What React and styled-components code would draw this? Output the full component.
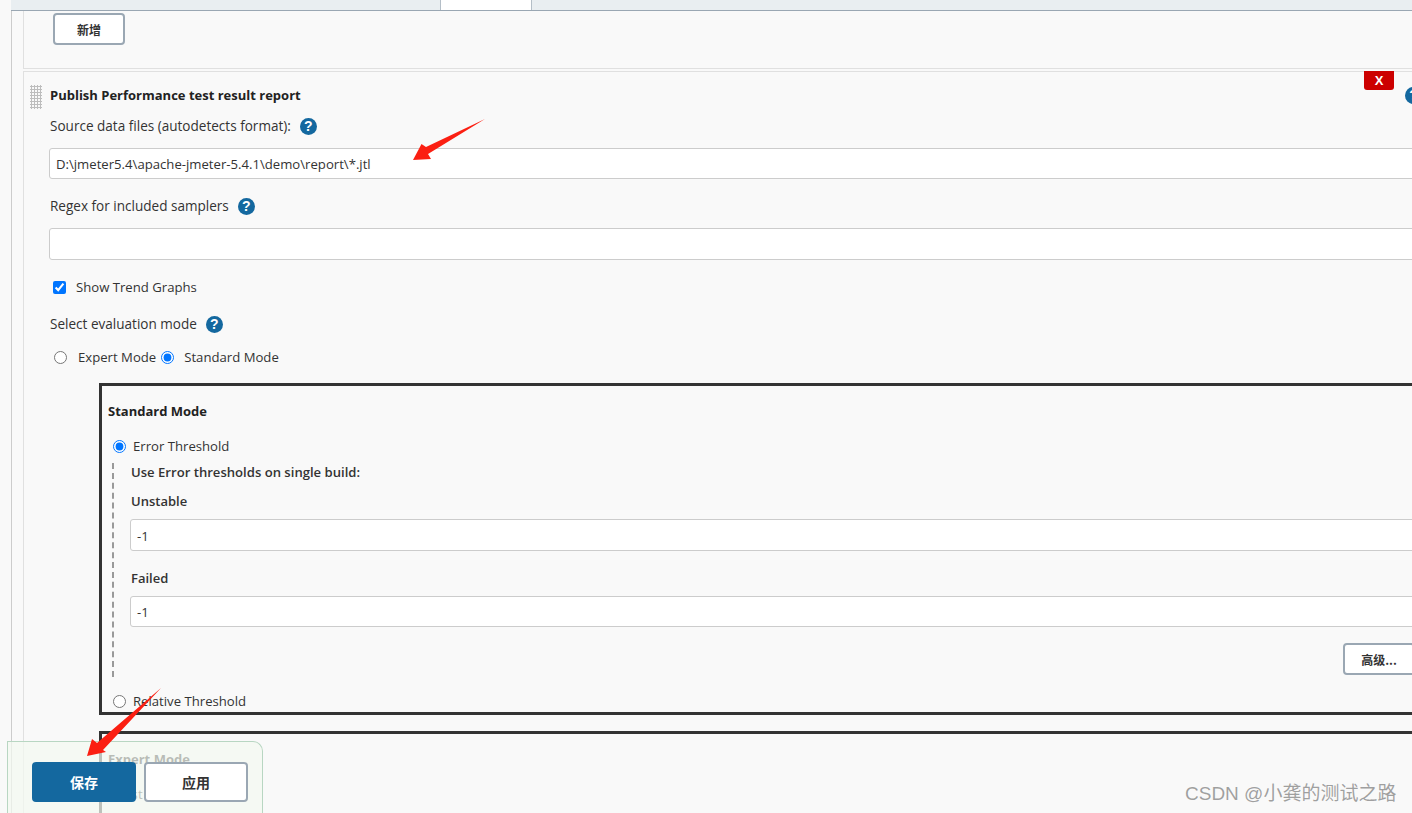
import React from 'react';
import styled, { createGlobalStyle } from 'styled-components';

const GlobalStyle = createGlobalStyle`
  html, body {
    margin: 0;
    padding: 0;
    background: #f9f9f9;
  }
  body {
    font-family: "Open Sans", "Noto Sans CJK SC", sans-serif;
    font-size: 13px;
    color: #333;
    overflow: hidden;
  }
`;

const Page = styled.div`
  position: relative;
  width: 1412px;
  height: 813px;
  overflow: hidden;
  background: #f9f9f9;
`;

const TabBar = styled.div`
  display: flex;
  height: 10px;
  margin-left: 11px;
  padding-left: 429px;
  background: #e9eef1;
  border-bottom: 1px solid #9aa7b3;
`;

const Tab = styled.div`
  width: 90px;
  height: 10px;
  background: #fff;
  border-left: 1px solid #b4bec7;
  border-right: 1px solid #b4bec7;
`;

const Main = styled.div`
  width: 1460px;
  height: 802px;
  margin-left: 11px;
  padding-left: 11px;
  border-left: 1px solid #ccc;
`;

const AddSection = styled.div`
  height: 58px;
  box-sizing: border-box;
  padding: 2px 0 0 29px;
  border-left: 1px solid #e0e0e0;
  border-bottom: 1px solid #e0e0e0;
`;

const Button = styled.button`
  width: ${({ $w }) => $w || 72}px;
  height: ${({ $h }) => $h || 32}px;
  box-sizing: border-box;
  padding: 0;
  background: #fff;
  border: 2px solid #9aa7b3;
  border-radius: 4px;
  color: #333;
  font-family: "Noto Sans CJK SC", sans-serif;
  font-size: ${({ $size }) => $size || 12}px;
  font-weight: 700;
`;

const Card = styled.section`
  position: relative;
  height: 760px;
  box-sizing: border-box;
  margin-top: 2px;
  padding-left: 25px;
  border-left: 1px solid #e0e0e0;
  border-top: 1px solid #e0e0e0;
`;

const Handle = styled.div`
  position: absolute;
  left: 6px;
  top: 13px;
  width: 12px;
  height: 24px;
  background-image: radial-gradient(#bdbdbd 1px, transparent 1.2px);
  background-size: 3px 3px;
`;

const DeleteButton = styled.button`
  position: absolute;
  left: 1340px;
  top: -1px;
  width: 30px;
  height: 19px;
  padding: 0 0 1px;
  background: #cc0000;
  border: none;
  border-radius: 0 0 3px 3px;
  color: #fff;
  font-family: "Liberation Sans", sans-serif;
  font-size: 13px;
  font-weight: 700;
`;

const TitleRow = styled.div`
  display: flex;
  align-items: center;
  justify-content: space-between;
  width: 1372px;
  height: 18px;
  padding: 14px 0 0 1px;
`;

const Title = styled.div`
  color: #222;
  font-size: 13px;
  font-weight: 700;
`;

const LabelRow = styled.div`
  display: flex;
  align-items: center;
  gap: 9px;
  height: 20px;
  margin-top: ${({ $top }) => $top}px;
  padding-left: 1px;
  color: #333;
  font-size: 13.55px;
`;

const Help = styled.span`
  display: inline-flex;
  flex: none;
  align-items: center;
  justify-content: center;
  width: 17px;
  height: 17px;
  border-radius: 50%;
  background: #14689f;
  color: #fff;
  font-family: "Liberation Sans", sans-serif;
  font-size: 14px;
  font-weight: 700;
`;

const TextInput = styled.div`
  display: flex;
  align-items: center;
  height: ${({ $h }) => $h || 31}px;
  box-sizing: border-box;
  margin-top: ${({ $top }) => $top}px;
  padding: 1px 0 0 6px;
  background: #fff;
  border: 1px solid #ccc;
  border-radius: 3px;
  color: #333;
  font-size: 13.15px;
`;

const CheckRow = styled.label`
  display: flex;
  align-items: center;
  height: 20px;
  margin: ${({ $top }) => $top}px 0 0 ${({ $left }) => $left || 0}px;
  color: #333;
  font-size: 13.15px;
`;

const Native = styled.input`
  flex: none;
  width: 13px;
  height: 13px;
  margin: 0 ${({ $gap }) => $gap || 10}px 0 ${({ $before }) => $before || 0}px;
  accent-color: #0075ff;
`;

const ModeBox = styled.div`
  width: 1320px;
  height: ${({ $h }) => $h}px;
  box-sizing: border-box;
  margin: ${({ $top }) => $top}px 0 0 50px;
  padding-left: 6px;
  border: 3px solid #333;
`;

const BoxTitle = styled.div`
  height: 20px;
  margin-top: ${({ $top }) => $top}px;
  color: #222;
  font-weight: 700;
`;

const HiddenLine = styled.div`
  height: 20px;
  margin: 15px 0 0 9px;
  font-size: 13.15px;
`;

const Branch = styled.div`
  width: 1303px;
  height: 214px;
  box-sizing: border-box;
  margin: 7px 0 0 4px;
  padding-left: 16px;
  border-left: 2px dashed #999;
`;

const BranchHeading = styled.div`
  height: 20px;
  padding-left: 1px;
  font-size: 13.1px;
  font-weight: 600;
`;

const FieldLabel = styled.div`
  height: 20px;
  margin-top: ${({ $top }) => $top}px;
  padding-left: 1px;
  font-weight: 600;
`;

const AdvancedRow = styled.div`
  display: flex;
  justify-content: flex-end;
  margin-top: 16px;
`;

const BottomBar = styled.div`
  position: absolute;
  left: 7px;
  bottom: 0;
  display: flex;
  gap: 8px;
  width: 256px;
  height: 72px;
  box-sizing: border-box;
  padding: 20px 0 0 24px;
  background: rgba(242, 248, 240, 0.72);
  border: 1px solid #b8d6c2;
  border-bottom: none;
  border-radius: 0 10px 0 0;
`;

const SaveButton = styled(Button)`
  background: #14689f;
  border-color: #14689f;
  color: #fff;
`;

const Watermark = styled.div`
  position: absolute;
  left: 1185px;
  top: 781px;
  color: rgba(125, 125, 125, 0.72);
  font-family: "Liberation Sans", "Noto Sans CJK SC", sans-serif;
  font-size: 19px;
  line-height: 26px;
  white-space: nowrap;
`;

const Arrows = styled.svg`
  position: absolute;
  left: 0;
  top: 0;
  pointer-events: none;
`;

export default function App() {
  return (
    <Page>
      <GlobalStyle />
      <TabBar>
        <Tab />
      </TabBar>
      <Main>
        <AddSection>
          <Button>新增</Button>
        </AddSection>
        <Card>
          <Handle />
          <DeleteButton>X</DeleteButton>
          <TitleRow>
            <Title>Publish Performance test result report</Title>
            <Help>?</Help>
          </TitleRow>
          <LabelRow $top={12}>
            Source data files (autodetects format):
            <Help>?</Help>
          </LabelRow>
          <TextInput $top={12}>D:\jmeter5.4\apache-jmeter-5.4.1\demo\report\*.jtl</TextInput>
          <LabelRow $top={17}>
            Regex for included samplers
            <Help>?</Help>
          </LabelRow>
          <TextInput $top={12} $h={32} />
          <CheckRow $top={17} $left={4}>
            <Native type="checkbox" defaultChecked />
            Show Trend Graphs
          </CheckRow>
          <LabelRow $top={17}>
            Select evaluation mode
            <Help>?</Help>
          </LabelRow>
          <CheckRow $top={13} $left={5}>
            <Native type="radio" name="mode" $gap={11} />
            Expert Mode
            <Native type="radio" name="mode" $before={5} defaultChecked />
            Standard Mode
          </CheckRow>
          <ModeBox $top={16} $h={332}>
            <BoxTitle $top={16}>Standard Mode</BoxTitle>
            <CheckRow $top={14} $left={5}>
              <Native type="radio" name="threshold" $gap={7} defaultChecked />
              Error Threshold
            </CheckRow>
            <Branch>
              <BranchHeading>Use Error thresholds on single build:</BranchHeading>
              <FieldLabel $top={9}>Unstable</FieldLabel>
              <TextInput $top={7} $h={32}>-1</TextInput>
              <FieldLabel $top={18}>Failed</FieldLabel>
              <TextInput $top={7}>-1</TextInput>
              <AdvancedRow>
                <Button>高级...</Button>
              </AdvancedRow>
            </Branch>
            <CheckRow $top={14} $left={5}>
              <Native type="radio" name="threshold" $gap={7} />
              Relative Threshold
            </CheckRow>
          </ModeBox>
          <ModeBox $top={16} $h={120}>
            <BoxTitle $top={16}>Expert Mode</BoxTitle>
            <HiddenLine>Test</HiddenLine>
          </ModeBox>
        </Card>
      </Main>
      <BottomBar>
        <SaveButton $w={104} $h={40} $size={14}>保存</SaveButton>
        <Button $w={104} $h={40} $size={14}>应用</Button>
      </BottomBar>
      <Arrows width="1412" height="813" viewBox="0 0 1412 813">
        <polygon points="485,119 428,154 431,159 413,160 421.5,144 426,147" fill="#fb1f12" />
        <polygon points="161,688 103,750 106,752 87,756 92,739 97,743" fill="#fb1f12" />
      </Arrows>
      <Watermark>CSDN @小龚的测试之路</Watermark>
    </Page>
  );
}
